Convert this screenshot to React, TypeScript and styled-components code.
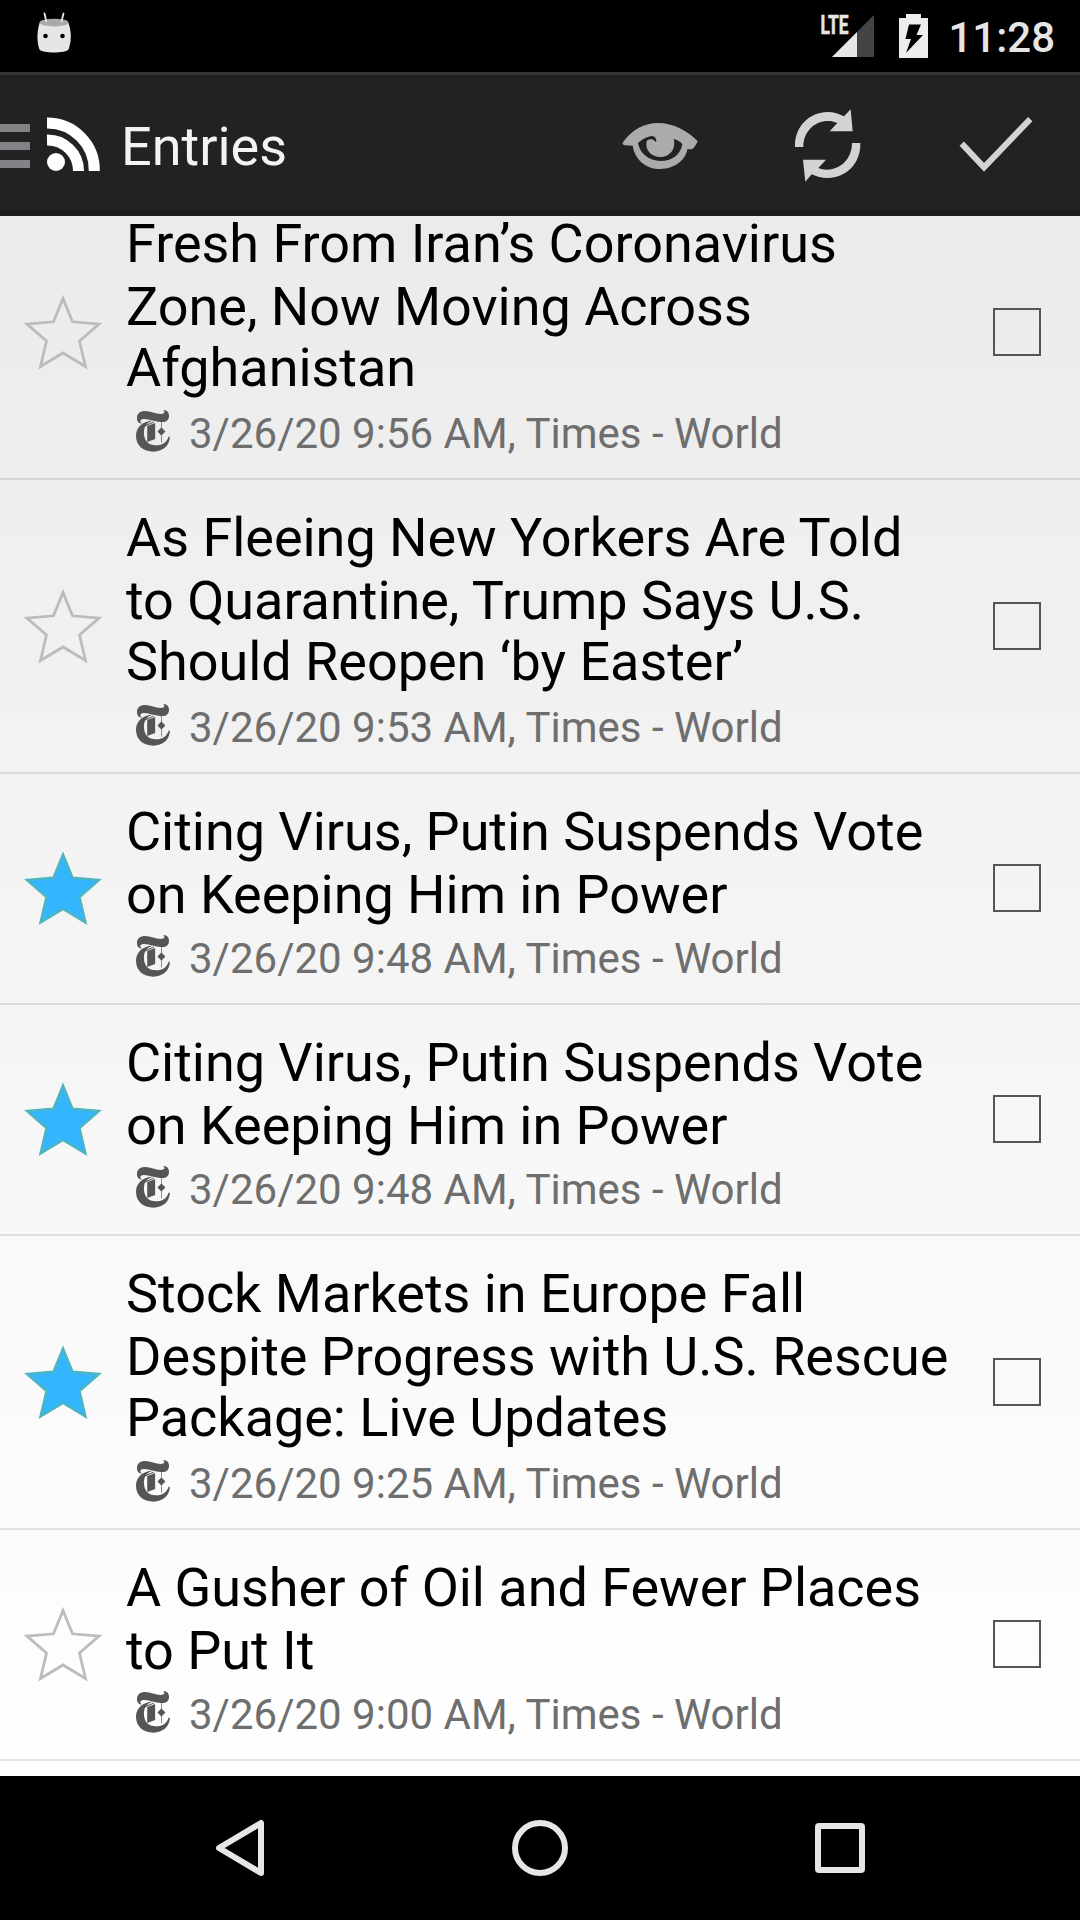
import React from "react";
import styled, { createGlobalStyle } from "styled-components";

const GlobalStyle = createGlobalStyle`
  html, body { margin: 0; padding: 0; background: #000; }
  * { box-sizing: border-box; }
`;

const Screen = styled.div`
  width: 1080px;
  height: 1920px;
  display: flex;
  flex-direction: column;
  overflow: hidden;
  background: #000;
  font-family: Roboto, "Liberation Sans", sans-serif;
`;

const StatusBar = styled.header`
  flex: none;
  height: 72px;
  display: flex;
  align-items: center;
  justify-content: space-between;
  padding: 0 25px 0 33px;
  background: #000;
`;

const StatusGroup = styled.div`
  display: flex;
  align-items: center;
  height: 72px;
`;

const Clock = styled.span`
  margin-left: 18px;
  padding-top: 3px;
  font-size: 42px;
  line-height: 50px;
  font-weight: 500;
  color: #e6e6e6;
`;

const Icon = styled.svg`
  display: block;
  flex: none;
  overflow: visible;
`;

const AppBar = styled.div`
  flex: none;
  height: 144px;
  display: flex;
  align-items: center;
  justify-content: space-between;
  padding-top: 3px;
  background: #222;
  border-top: 3px solid #363636;
  border-bottom: 6px solid #1b1b1b;
`;

const BarStart = styled.div`
  display: flex;
  align-items: center;
`;

const Title = styled.h1`
  margin: 0 0 0 20px;
  padding-top: 6px;
  font-size: 54px;
  line-height: 64px;
  font-weight: 400;
  color: #f3f3f3;
`;

const Actions = styled.div`
  display: flex;
`;

const Action = styled.button<{ $drop?: number }>`
  width: 168px;
  height: 132px;
  padding: ${(p) => p.$drop ?? 0}px 0 0;
  border: 0;
  background: none;
  display: flex;
  align-items: center;
  justify-content: center;
`;

const List = styled.main`
  flex: none;
  height: 1560px;
  overflow: hidden;
  background: linear-gradient(#ebebeb, #ffffff);
`;

const Entries = styled.ul`
  list-style: none;
  margin: -30px 0 0;
  padding: 0;
`;

const Row = styled.li<{ $lines: number }>`
  height: ${(p) => 105 + p.$lines * 63}px;
  display: grid;
  grid-template-columns: 126px 1fr 48px;
  padding-right: 39px;
  padding-bottom: ${(p) => (p.$lines % 2 ? 0 : 1)}px;
  align-items: center;
  border-bottom: 2px solid rgba(0, 0, 0, 0.1);
`;

const StarCell = styled.div`
  display: flex;
  justify-content: center;
`;

const Body = styled.div`
  align-self: start;
  padding-top: 26px;
`;

const Headline = styled.h2`
  margin: 0;
  font-size: 54px;
  font-weight: 400;
  letter-spacing: -0.035px;
  color: #000;
`;

const Line = styled.span`
  display: block;
  height: 63px;
  line-height: 63px;
  white-space: nowrap;
  &:nth-child(3) {
    margin-top: -2px;
    margin-bottom: 2px;
  }
`;

const Meta = styled.p`
  margin: 0;
  display: flex;
  align-items: flex-start;
  padding: 8px 0 0 10px;
  gap: 19px;
  font-size: 42px;
  line-height: 50px;
  color: #6e6e6e;
  white-space: nowrap;

  svg {
    margin-top: 1px;
  }
`;

const Checkbox = styled.span`
  width: 48px;
  height: 48px;
  border: 2px solid #555;
`;

const NavBar = styled.nav`
  flex: none;
  height: 144px;
  display: flex;
  align-items: center;
  justify-content: center;
  background: #000;
`;

const NavButton = styled.button`
  width: 300px;
  height: 144px;
  padding: 0;
  border: 0;
  background: none;
  display: flex;
  align-items: center;
  justify-content: center;
`;

const Star = ({ on }: { on: boolean }) => (
  <Icon width="80" height="80" viewBox="23 292 80 80">
    <path
      d="M63 298.5 L72.5 321.8 L99 324 L79.5 341 L85.5 366.5 L63 353 L40.5 366.5 L46.5 341 L27 324 L53.5 321.8 Z"
      fill={on ? "#33b5ff" : "none"}
      stroke={on ? "#4db5c0" : "#bcbcbc"}
      strokeWidth={on ? 2.4 : 2.8}
    />
  </Icon>
);

const TimesMark = () => (
  <Icon width="34" height="42" viewBox="408 570 103 127" fill="#555">
    <path d="M427 611C414 611 410 602 411 592C412 579 423 573 435 573C453 573 467 582 483 582C494 582 498 577 490 571C502 569 508 577 508 588C508 601 498 608 483 606C466 605 447 596 430 597C420 598 418 606 427 611Z" />
    <path d="M458 602C443 609 432 616 432 639C432 663 446 677 468 677C490 677 502 666 507 650L511 652C508 680 489 696 461 696C430 696 408 678 408 648C408 621 430 604 458 602Z" />
    <path d="M442 618L466 609V658L442 667Z" />
    <path d="M484 606h2v18l11 11l-11 11v22h-2v-22l-11-11l11-11Z" />
    <path d="M434 617L462 605V608L434 621Z" />
  </Icon>
);

type Entry = { star: boolean; lines: string[]; time: string };

const entries: Entry[] = [
  { star: false, lines: ["Fresh From Iran’s Coronavirus", "Zone, Now Moving Across", "Afghanistan"], time: "9:56" },
  { star: false, lines: ["As Fleeing New Yorkers Are Told", "to Quarantine, Trump Says U.S.", "Should Reopen ‘by Easter’"], time: "9:53" },
  { star: true, lines: ["Citing Virus, Putin Suspends Vote", "on Keeping Him in Power"], time: "9:48" },
  { star: true, lines: ["Citing Virus, Putin Suspends Vote", "on Keeping Him in Power"], time: "9:48" },
  { star: true, lines: ["Stock Markets in Europe Fall", "Despite Progress with U.S. Rescue", "Package: Live Updates"], time: "9:25" },
  { star: false, lines: ["A Gusher of Oil and Fewer Places", "to Put It"], time: "9:00" },
];

export default function App() {
  return (
    <Screen>
      <GlobalStyle />
      <StatusBar>
        <StatusGroup>
          <Icon width="42" height="72" viewBox="0 0 42 72">
            <path d="M6.5 23C4 31 3.5 42 6.5 49.5C9 53.5 33 53.5 35.5 49.5C38.500 42 38.500 31 35.500 23Z" fill="#e6e6e6" />
            <ellipse cx="21" cy="22.6" rx="14.5" ry="3.9" fill="#a9a9a9" />
            <path d="M11.5 13.5L13.300 21.300M30.500 13.500L28.600 21.300" stroke="#e6e6e6" strokeWidth="1.8" strokeLinecap="round" />
            <circle cx="12.5" cy="36" r="2.3" fill="#000" />
            <circle cx="29.5" cy="36" r="2.3" fill="#000" />
          </Icon>
        </StatusGroup>
        <StatusGroup>
          <Icon width="110" height="72" viewBox="820 0 110 72">
            <path d="M832 57L874 15V57Z" fill="#444" />
            <path d="M832 57L857 32V57Z" fill="#e6e6e6" />
            <text x="820.5" y="33.5" fontFamily="Roboto, sans-serif" fontSize="26" fontWeight="700" fill="#e6e6e6" stroke="#e6e6e6" strokeWidth="0.6" textLength="28" lengthAdjust="spacingAndGlyphs">LTE</text>
            <path d="M906 14h15v4h7v40h-29V18h7Z" fill="#ededed" />
            <path d="M909 24.5h12l-4.5 10.5h6.5l-17 18l5-14h-5.5Z" fill="#000" />
          </Icon>
          <Clock>11:28</Clock>
        </StatusGroup>
      </StatusBar>
      <AppBar>
        <BarStart>
          <Icon width="101" height="132" viewBox="0 78 101 132">
            <path d="M0 124h30v8H0ZM0 142h30v8H0ZM0 160h30v8H0Z" fill="#828387" />
            <circle cx="56" cy="162" r="9" fill="#fff" />
            <path d="M47 140A31 31 0 0 1 78.5 171M47 123A47 47 0 0 1 94.3 171" fill="none" stroke="#fff" strokeWidth="11" />
          </Icon>
          <Title>Entries</Title>
        </BarStart>
        <Actions>
          <Action $drop={4}>
            <Icon width="76" height="48" viewBox="66 126 228 144">
              <path d="M68 188C96 148 134 129 174 129C220 129 264 153 293 184C288 195 281 207 274 208L262 208C255 244 221 267 181 267C138 267 104 239 98 197L76 196C70 195 67 192 68 188Z" fill="#ababab" />
              <path d="M114 189C126 178 142 169 157 168C166 170 170 176 169 186C163 185 162 179 156 178C149 177 142 179 140 184C134 212 155 231 181 231C208 231 229 209 221 177C231 179 240 184 247 192C242 225 215 243 181 243C147 242 119 221 114 189Z" fill="#222" />
            </Icon>
          </Action>
          <Action $drop={3}>
            <Icon width="68" height="74" viewBox="584 86 204 222" fill="#d3d3d3">
              <path d="M587 200C585 137 632 95 685 95C704 95 720 101 734 108L754 87L760 153H691L714 128C669 108 612 139 612 200Z" />
              <path d="M783 188C785 251 738 293 685 293C666 293 652 289 637 282L618 304L611 238H680L657 263C702 281 758 249 758 188Z" />
            </Icon>
          </Action>
          <Action>
            <Icon width="72" height="54" viewBox="542 352 213 160">
              <path d="M547 431L613 501L750 358" fill="none" stroke="#d3d3d3" strokeWidth="18" />
            </Icon>
          </Action>
        </Actions>
      </AppBar>
      <List>
        <Entries>
          {entries.map((e, i) => (
            <Row key={i} $lines={e.lines.length}>
              <StarCell>
                <Star on={e.star} />
              </StarCell>
              <Body>
                <Headline>
                  {e.lines.map((l) => (
                    <Line key={l}>{l}</Line>
                  ))}
                </Headline>
                <Meta>
                  <TimesMark />
                  <span>3/26/20 {e.time} AM, Times - World</span>
                </Meta>
              </Body>
              <Checkbox />
            </Row>
          ))}
        </Entries>
      </List>
      <NavBar>
        <NavButton>
          <Icon width="56" height="60" viewBox="212 1818 56 60">
            <path d="M261 1823V1873L219 1848Z" fill="none" stroke="#e6e6e6" strokeWidth="6" strokeLinejoin="round" />
          </Icon>
        </NavButton>
        <NavButton>
          <Icon width="56" height="56" viewBox="0 0 56 56">
            <circle cx="28" cy="28" r="25" fill="none" stroke="#e6e6e6" strokeWidth="6" />
          </Icon>
        </NavButton>
        <NavButton>
          <Icon width="50" height="50" viewBox="0 0 50 50">
            <rect x="3" y="3" width="44" height="44" rx="1" fill="none" stroke="#e6e6e6" strokeWidth="6" />
          </Icon>
        </NavButton>
      </NavBar>
    </Screen>
  );
}
